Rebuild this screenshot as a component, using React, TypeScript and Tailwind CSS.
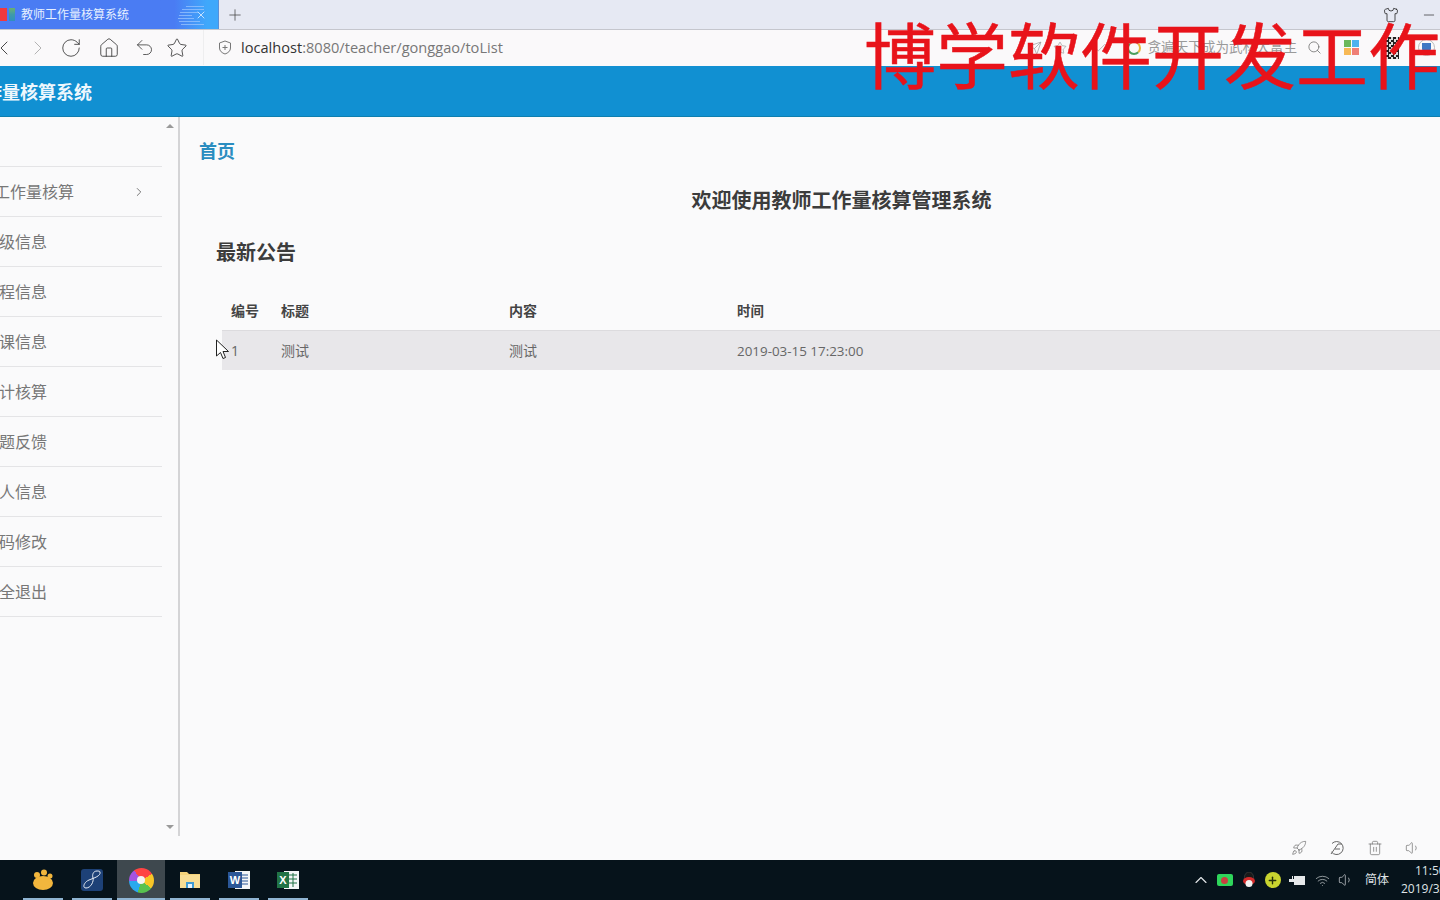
import React from "react";
import { ChevronLeft, ChevronRight, RotateCw, Home, Undo2, Star, Plus, X, Search, Minus, Shirt, Rocket, Trash2, Volume1, ChevronUp, Wifi, Check, Send } from "lucide-react";

const cjk = { fontFamily: '"Open Sans","Noto Sans CJK SC",sans-serif' };

const menu = [
  { w: "w-[74px]", t: "教师工作量核算", arrow: true },
  { w: "w-[47px]", t: "班级信息" },
  { w: "w-[47px]", t: "课程信息" },
  { w: "w-[47px]", t: "排课信息" },
  { w: "w-[47px]", t: "统计核算" },
  { w: "w-[47px]", t: "问题反馈" },
  { w: "w-[47px]", t: "个人信息" },
  { w: "w-[47px]", t: "密码修改" },
  { w: "w-[47px]", t: "安全退出" },
];

function Row({ cells, head }: { cells: string[]; head?: boolean }) {
  const base = head ? "text-[#444] font-bold" : "text-[#666]";
  return (
    <div className={`flex items-center text-[14px] ${base} ${head ? "h-[40px] border-b border-[#dcdbde]" : "h-[39px] bg-[#e8e7ea]"}`}>
      <div className="w-[59px] pl-[9px]">{cells[0]}</div>
      <div className="w-[228px]">{cells[1]}</div>
      <div className="w-[228px]">{cells[2]}</div>
      <div className={head ? "text-[13.4px] pt-px" : "text-[13.4px] pt-[2px]"}>{cells[3]}</div>
    </div>
  );
}

function TaskItem({ w, active, children }: { w: string; active?: boolean; children: React.ReactNode }) {
  return (
    <div className={`relative h-full flex items-center justify-center shrink-0 ${w} ${active ? "bg-[#3e484e]" : ""}`}>
      {children}
      <div className="absolute bottom-0 h-[2px] left-0 right-0 bg-[#8fb4d2]" />
    </div>
  );
}

export default function App() {
  return (
    <div className="relative w-[1440px] h-[900px] overflow-hidden flex flex-col bg-[#fafafb]" style={cjk}>
      {/* Tab strip */}
      <div className="h-[30px] shrink-0 flex bg-[#e6e9f3] border-b border-[#c5c6cd]">
        <div className="relative w-[219px] flex items-center bg-gradient-to-r from-[#4a7cf3] from-80% to-[#3fa8fb] to-95% border-r border-[#5a8fd8]">
          <div className="flex items-center gap-[2px] w-[21px] shrink-0 h-full">
            <div className="w-[7px] h-[13px] bg-[#f0393f]" />
            <div className="w-[6px] h-[13px] bg-gradient-to-b from-[#6bb06a] via-[#3f9aa8] to-[#2f8fc0]" />
          </div>
          <span className="text-[12px] text-[#e6f0ff] whitespace-nowrap">教师工作量核算系统</span>
          <div className="absolute left-[178px] top-[2px] w-[26px] h-[26px] flex flex-col justify-center gap-[2px] opacity-70">
            <div className="h-px ml-[8px] bg-[#9fc8ff]" />
            <div className="h-px ml-[4px] bg-[#9fc8ff]" />
            <div className="h-px ml-[2px] mr-[6px] bg-[#9fc8ff]" />
            <div className="h-px ml-[1px] mr-[12px] bg-[#9fc8ff]" />
            <div className="h-px mr-[10px] bg-[#9fc8ff]" />
            <div className="h-px ml-[1px] mr-[4px] bg-[#9fc8ff]" />
            <div className="h-px ml-[3px] bg-[#9fc8ff]" />
          </div>
          <X className="absolute left-[195px] top-[9px] text-[#f0f8ff]" size={12} strokeWidth={1.5} />
        </div>
        <div className="flex items-center ml-[7px]">
          <Plus size={18} strokeWidth={1} className="text-[#444]" />
        </div>
        <div className="flex-1" />
        <div className="flex items-center gap-[20px] pr-[3px]">
          <Shirt size={16} strokeWidth={1.2} className="text-[#222] mr-[2px]" />
          <Minus size={16} strokeWidth={1} className="text-[#222]" />
        </div>
      </div>

      {/* Toolbar */}
      <div className="h-[36px] shrink-0 flex items-center bg-[#faf9fa] pb-[1px]">
        <div className="w-[212px] h-full shrink-0 flex items-center border-r border-[#eeeeef] -ml-[8px]">
          <ChevronLeft size={24} strokeWidth={0.9} className="text-[#333] shrink-0" />
          <ChevronRight size={24} strokeWidth={0.9} className="text-[#aaa] ml-[10px] shrink-0" />
          <RotateCw size={22} strokeWidth={0.9} className="text-[#333] ml-[10px] shrink-0" />
          <Home size={22} strokeWidth={0.9} className="text-[#333] ml-[16px] shrink-0" />
          <Undo2 size={21} strokeWidth={0.9} className="text-[#333] ml-[14px] shrink-0" />
          <Star size={22} strokeWidth={0.9} className="text-[#333] ml-[11px] shrink-0" />
        </div>
        <svg width="14" height="15" viewBox="0 0 14 15" className="ml-[14px] shrink-0 text-[#777]" fill="none" stroke="currentColor" strokeWidth="1">
          <path d="M7 1 L12.5 3 V8 C12.5 11 10 13 7 14 C4 13 1.5 11 1.5 8 V3 Z" />
          <path d="M7 5 V10 M4.5 7.5 H9.5" />
        </svg>
        <div className="ml-[9px] text-[14.6px] whitespace-nowrap text-[#777]">
          <span className="text-[#333]">localhost</span>:8080/teacher/gonggao/toList
        </div>
        <div className="flex-1" />
        <div className="flex items-center text-[#888]">
          <Send size={14} strokeWidth={1} className="mr-[11px]" />
          <Star size={14} strokeWidth={1} className="mr-[26px]" />
          <Check size={14} strokeWidth={1} className="mr-[20px]" />
          <div className="w-[14px] h-[14px] rounded-full border-2 border-t-[#dd5a43] border-r-[#e5b73b] border-b-[#4a9d5b] border-l-[#4a9d5b] mr-[6px]" />
          <span className="text-[13.6px] whitespace-nowrap text-[#9a9a9a]">贪遍天下成为武林大富主</span>
          <Search size={15} strokeWidth={1.2} className="ml-[10px] text-[#666]" />
          <div className="ml-[22px] grid grid-cols-2 gap-px w-[15px] h-[15px] shrink-0">
            <div className="bg-[#6cb85a]" />
            <div className="bg-[#4db2ee]" />
            <div className="bg-[#f7b955]" />
            <div className="bg-[#ef7f76]" />
          </div>
          <div className="ml-[22px] w-[18px] h-[22px] shrink-0 bg-[repeating-conic-gradient(#222_0_25%,#ddd_0_50%)] bg-[length:5px_5px]" />
          <div className="ml-[19px] mr-[5px] w-[17px] h-[17px] rounded-full border border-[#bbb] flex items-center justify-center shrink-0">
            <div className="w-[9px] h-[10px] rounded-b-full bg-[#3f78c4]" />
          </div>
        </div>
      </div>

      {/* Blue header */}
      <div className="h-[51px] shrink-0 flex items-center bg-[#1190d2] border-b border-[#0e7fae] pt-[2px]">
        <div className="w-[92px] flex justify-end overflow-hidden shrink-0">
          <span className="text-[18px] font-bold text-[#eef7fd] whitespace-nowrap">教师工作量核算系统</span>
        </div>
      </div>

      {/* Body */}
      <div className="flex-1 flex min-h-0">
        <aside className="w-[180px] shrink-0 flex border-r-2 border-[#d4d4d6]">
          <nav className="w-[162px] shrink-0">
            <div className="h-[50px] border-b border-[#e4e4e6]" />
            {menu.map((m) => (
              <div key={m.t} className="h-[50px] border-b border-[#e4e4e6] flex items-center text-[16px] text-[#777]">
                <div className={`${m.w} flex justify-end overflow-hidden shrink-0`}>
                  <span className="whitespace-nowrap">{m.t}</span>
                </div>
                {m.arrow && <ChevronRight size={14} strokeWidth={1.5} className="ml-[58px] text-[#666]" />}
              </div>
            ))}
          </nav>
          <div className="flex-1 flex flex-col justify-between items-center py-[7px]">
            <div className="w-0 h-0 border-x-[4px] border-x-transparent border-b-[4px] border-b-[#9a9a9a]" />
            <div className="w-0 h-0 border-x-[4px] border-x-transparent border-t-[4px] border-t-[#9a9a9a]" />
          </div>
        </aside>

        <main className="flex-1 min-w-0 overflow-hidden">
          <div className="w-[1304px] pl-[19px] pt-[21px]">
            <div className="text-[18px] leading-[26px] font-bold text-[#2a8dc0]">首页</div>
            <div className="mt-[22px] text-center text-[20px] leading-[30px] font-bold text-[#3c3c3c]">欢迎使用教师工作量核算管理系统</div>
            <div className="mt-[22px] ml-[17px] text-[20px] leading-[30px] font-bold text-[#3c3c3c]">最新公告</div>
            <div className="mt-[23px] ml-[23px]">
              <Row head cells={["编号", "标题", "内容", "时间"]} />
              <Row cells={["1", "测试", "测试", "2019-03-15 17:23:00"]} />
            </div>
          </div>
        </main>
      </div>

      {/* Bottom tools */}
      <div className="h-[24px] shrink-0 flex items-center justify-end gap-[22px] pr-[19px] text-[#666]">
        <Rocket size={16} strokeWidth={1} />
        <svg width="16" height="16" viewBox="0 0 16 16" fill="none" stroke="currentColor" strokeWidth="1">
          <path d="M3 3.5 A6.5 6.5 0 1 1 2.5 12" />
          <path d="M2 14 L9 4 H13 M6 9 H11" />
        </svg>
        <Trash2 size={16} strokeWidth={1} />
        <Volume1 size={16} strokeWidth={1} />
      </div>

      {/* Taskbar */}
      <div className="h-[40px] shrink-0 flex items-center bg-[#06131b]">
        <div className="w-[23px] shrink-0" />
        <div className="flex h-full gap-[9px]">
          <TaskItem w="w-[40px]">
            <svg width="24" height="22" viewBox="0 0 24 22">
              <ellipse cx="12" cy="14" rx="10" ry="7" fill="#f2b63d" />
              <circle cx="6" cy="6" r="3" fill="#f2b63d" />
              <circle cx="13" cy="3.5" r="3" fill="#f2b63d" />
              <circle cx="19" cy="7" r="2.5" fill="#f2b63d" />
            </svg>
          </TaskItem>
          <TaskItem w="w-[40px]">
            <svg width="24" height="24" viewBox="0 0 24 24">
              <rect x="1" y="1" width="22" height="22" rx="3" fill="#1d4177" />
              <path d="M17 3 C13 3 12 7 13 10 C14 13 11 20 6 20 C2 20 4 14 9 12 C14 10 21 8 20 4 C20 3 18 3 17 3 Z" fill="none" stroke="#e8eef6" strokeWidth="1" />
            </svg>
          </TaskItem>
          <TaskItem w="w-[48px] -mx-[4px]" active>
            <div className="w-[25px] h-[25px] rounded-full bg-[conic-gradient(#f44_0_16%,#f8c627_16%_36%,#58c24f_36%_55%,#2aa9ee_55%_75%,#a653e0_75%_90%,#f44_90%)] flex items-center justify-center">
              <div className="w-[8px] h-[8px] rounded-full bg-[#f4f4f4]" />
            </div>
          </TaskItem>
          <TaskItem w="w-[40px]">
            <svg width="22" height="20" viewBox="0 0 22 20">
              <path d="M1 2 H8 L10 4 H21 V18 H1 Z" fill="#f3d27a" />
              <rect x="1" y="5" width="20" height="13" fill="#f7dd94" />
              <path d="M7 18 V12 H15 V18 Z" fill="#3f9bd4" />
              <rect x="9" y="14" width="4" height="4" fill="#e9f3fa" />
            </svg>
          </TaskItem>
          <TaskItem w="w-[40px]">
            <svg width="24" height="22" viewBox="0 0 24 22">
              <rect x="8" y="2" width="15" height="18" fill="#f4f5f7" />
              <path d="M13 6 H21 M13 9 H21 M13 12 H21 M13 15 H21" stroke="#2b5797" strokeWidth="1" />
              <rect x="1" y="3" width="14" height="16" fill="#2b5797" />
              <text x="8" y="15" textAnchor="middle" fontSize="11" fontWeight="700" fill="#fff" fontFamily="Liberation Sans">W</text>
            </svg>
          </TaskItem>
          <TaskItem w="w-[40px]">
            <svg width="24" height="22" viewBox="0 0 24 22">
              <rect x="8" y="2" width="15" height="18" fill="#f4f5f7" />
              <path d="M13 6 H21 M13 10 H21 M13 14 H21 M17 4 V18" stroke="#217346" strokeWidth="1" />
              <rect x="1" y="3" width="12" height="16" fill="#217346" />
              <text x="7" y="15" textAnchor="middle" fontSize="11" fontWeight="700" fill="#fff" fontFamily="Liberation Sans">X</text>
            </svg>
          </TaskItem>
        </div>
        <div className="flex-1" />
        <div className="flex items-center h-full text-[#dfe3e6]">
          <ChevronUp size={20} strokeWidth={1.4} className="mr-[6px]" />
          <div className="w-[16px] h-[12px] rounded-[2px] bg-[#2fd65b] flex items-center justify-center mr-[9px]">
            <div className="w-[7px] h-[7px] rounded-full bg-[#c9403f]" />
          </div>
          <svg width="14" height="16" viewBox="0 0 14 16" className="mr-[9px]">
            <ellipse cx="7" cy="5" rx="4.5" ry="5" fill="#1a1a1a" stroke="#555" strokeWidth="0.5" />
            <ellipse cx="7" cy="9" rx="6" ry="4" fill="#d42a2a" />
            <ellipse cx="7" cy="11.5" rx="3.5" ry="3.5" fill="#f2f2f2" />
          </svg>
          <div className="w-[16px] h-[16px] rounded-full bg-[#c8d42f] flex items-center justify-center text-[#26300a] mr-[8px]">
            <Plus size={11} strokeWidth={3} />
          </div>
          <svg width="16" height="11" viewBox="0 0 16 11" className="mr-[10px]" fill="#e6e9eb">
            <path d="M0 4 H3 V1 H4 V4 H5 V7 H0 Z" />
            <rect x="5" y="1" width="11" height="9" />
          </svg>
          <Wifi size={15} strokeWidth={1} className="mr-[8px]" />
          <Volume1 size={16} strokeWidth={1} className="mr-[11px]" />
          <span className="text-[12px] mr-[12px] whitespace-nowrap">简体</span>
          <div className="w-[39px] flex flex-col items-end text-[12px] leading-[18px] whitespace-nowrap">
            <span className="w-[25px]">11:50</span>
            <span className="w-[39px]">2019/3/15</span>
          </div>
        </div>
      </div>

      {/* Overlaid watermark */}
      <div className="absolute left-[864px] top-[9px] text-[72px] leading-[86px] whitespace-nowrap text-[#e8131a] [-webkit-text-stroke:0.5px_#e8131a]" style={{ fontFamily: '"Noto Sans CJK SC",sans-serif' }}>
        博学软件开发工作
      </div>

      {/* Mouse cursor */}
      <svg className="absolute left-[215px] top-[339px]" width="16" height="21" viewBox="0 0 16 21">
        <path d="M1.5 1 V17 L5.5 13.5 L8 19.5 L10.5 18.5 L8 12.5 H13.5 Z" fill="#fff" stroke="#222" strokeWidth="1" />
      </svg>
    </div>
  );
}
